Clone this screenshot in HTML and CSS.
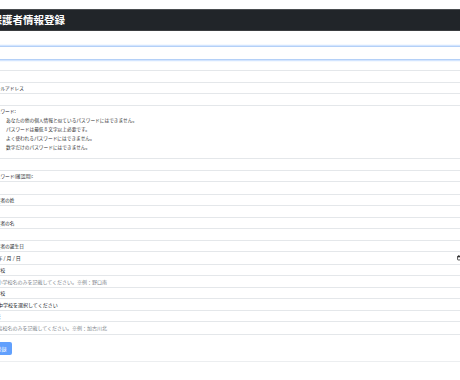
FILE: index.html
```html
<!DOCTYPE html>
<html lang="ja">
<head>
  <meta charset="UTF-8" />
  <meta name="viewport" content="width=device-width, initial-scale=1.0" />
  <title>保護者情報登録</title>
  <link rel="stylesheet" href="styles.css">
</head>
<body>
  <header class="site-header">
    <h1 class="site-title">保護者情報登録</h1>
  </header>

  <main class="page">
    <form class="signup-form">
      <div class="field">
        <label for="username">ID</label>
        <input id="username" class="form-control is-focused" type="text">
      </div>
      <div class="field">
        <label for="fullname">名</label>
        <input id="fullname" class="form-control" type="text">
      </div>
      <div class="field">
        <label for="email">メールアドレス</label>
        <input id="email" class="form-control" type="email">
      </div>
      <div class="field">
        <label for="password1">パスワード:</label>
        <ul class="help-list">
          <li>あなたの他の個人情報と似ているパスワードにはできません。</li>
          <li>パスワードは最低 8 文字以上必要です。</li>
          <li>よく使われるパスワードにはできません。</li>
          <li>数字だけのパスワードにはできません。</li>
        </ul>
        <input id="password1" class="form-control" type="password">
      </div>
      <div class="field">
        <label for="password2">パスワード(確認用):</label>
        <input id="password2" class="form-control" type="password">
      </div>
      <div class="field">
        <label for="last_name">保護者の姓</label>
        <input id="last_name" class="form-control" type="text">
      </div>
      <div class="field">
        <label for="first_name">保護者の名</label>
        <input id="first_name" class="form-control" type="text">
      </div>
      <div class="field">
        <label for="birthday">保護者の誕生日</label>
        <div id="birthday" class="form-control date-control">
          <span>年 / 月 / 日</span>
          <svg class="calendar-icon" viewBox="0 0 10 10">
            <rect x="1" y="2" width="8" height="7" rx="1" fill="none" stroke="#222" stroke-width="1.4"/>
            <rect x="1" y="2" width="8" height="2.2" fill="#222"/>
            <line x1="3" y1="0.5" x2="3" y2="2.5" stroke="#222" stroke-width="1.2"/>
            <line x1="7" y1="0.5" x2="7" y2="2.5" stroke="#222" stroke-width="1.2"/>
          </svg>
        </div>
      </div>
      <div class="field">
        <label for="elementary">小学校</label>
        <input id="elementary" class="form-control" type="text" placeholder="小学校名のみを記載してください。※例：野口南">
      </div>
      <div class="field">
        <label for="junior">中学校</label>
        <select id="junior" class="form-control form-select">
          <option>中学校を選択してください</option>
        </select>
      </div>
      <div class="field">
        <label for="high">高校</label>
        <input id="high" class="form-control" type="text" placeholder="高校名のみを記載してください。※例：加古川北">
      </div>

      <button class="btn-submit" type="submit" disabled>登録</button>
    </form>
    <hr class="footer-rule">
  </main>
</body>
</html>
```

FILE: styles.css
```css
* {
  margin: 0;
  padding: 0;
  box-sizing: border-box;
}

html, body {
  overflow: hidden;
}

body {
  background: #fff;
  color: #212529;
  font-family: "Noto Sans CJK JP", "Noto Sans", sans-serif;
}

.site-header {
  margin-top: 9px;
  height: 22px;
  background: #212529;
  border-top: 1px solid #4a4d50;
  border-bottom: 1px solid #3a3d40;
  margin-left: -8.5px;
}

.site-title {
  color: #fff;
  font-size: 10.5px;
  font-weight: 700;
  line-height: 20px;
}

/* page is wider than the window and shifted left, like the screenshot */
.page {
  width: 474px;
  margin-left: -9px;
  padding-top: 5.33px;
}

.field label {
  display: block;
  height: 10px;
  font-size: 4.7px;
  line-height: 10px;
  color: #212529;
  white-space: nowrap;
}

.form-control {
  display: block;
  width: 100%;
  height: 13.33px;
  padding: 0 5.4px;
  border: 1px solid #e4e7ea;
  border-radius: 2px;
  background: #fff;
  font-family: inherit;
  font-size: 5px;
  color: #212529;
  outline: none;
}

.form-control::placeholder {
  color: #7d848b;
}

.is-focused {
  border-color: #b4d0f7;
  box-shadow: 0 0 0 1.3px rgba(13, 110, 253, 0.18);
}

.form-select {
  appearance: none;
  -webkit-appearance: none;
  padding-left: 6px;
}

.date-control {
  display: flex;
  align-items: center;
  justify-content: space-between;
  padding-right: 2px;
  line-height: 1;
}

.calendar-icon {
  width: 5.5px;
  height: 5.5px;
}

.help-list {
  list-style: none;
  padding-left: 15px;
  margin-bottom: 5.67px;
  font-size: 4.7px;
  line-height: 9px;
  color: #333;
  white-space: nowrap;
}

.btn-submit {
  display: block;
  margin-top: 7px;
  height: 13.33px;
  padding: 0 5.6px;
  border: none;
  border-radius: 2px;
  background: #0d6efd;
  opacity: 0.65;
  color: #fff;
  font-family: inherit;
  font-size: 5px;
}

.footer-rule {
  margin-top: 6px;
  border: none;
  border-top: 1px solid #eceef0;
}
```
